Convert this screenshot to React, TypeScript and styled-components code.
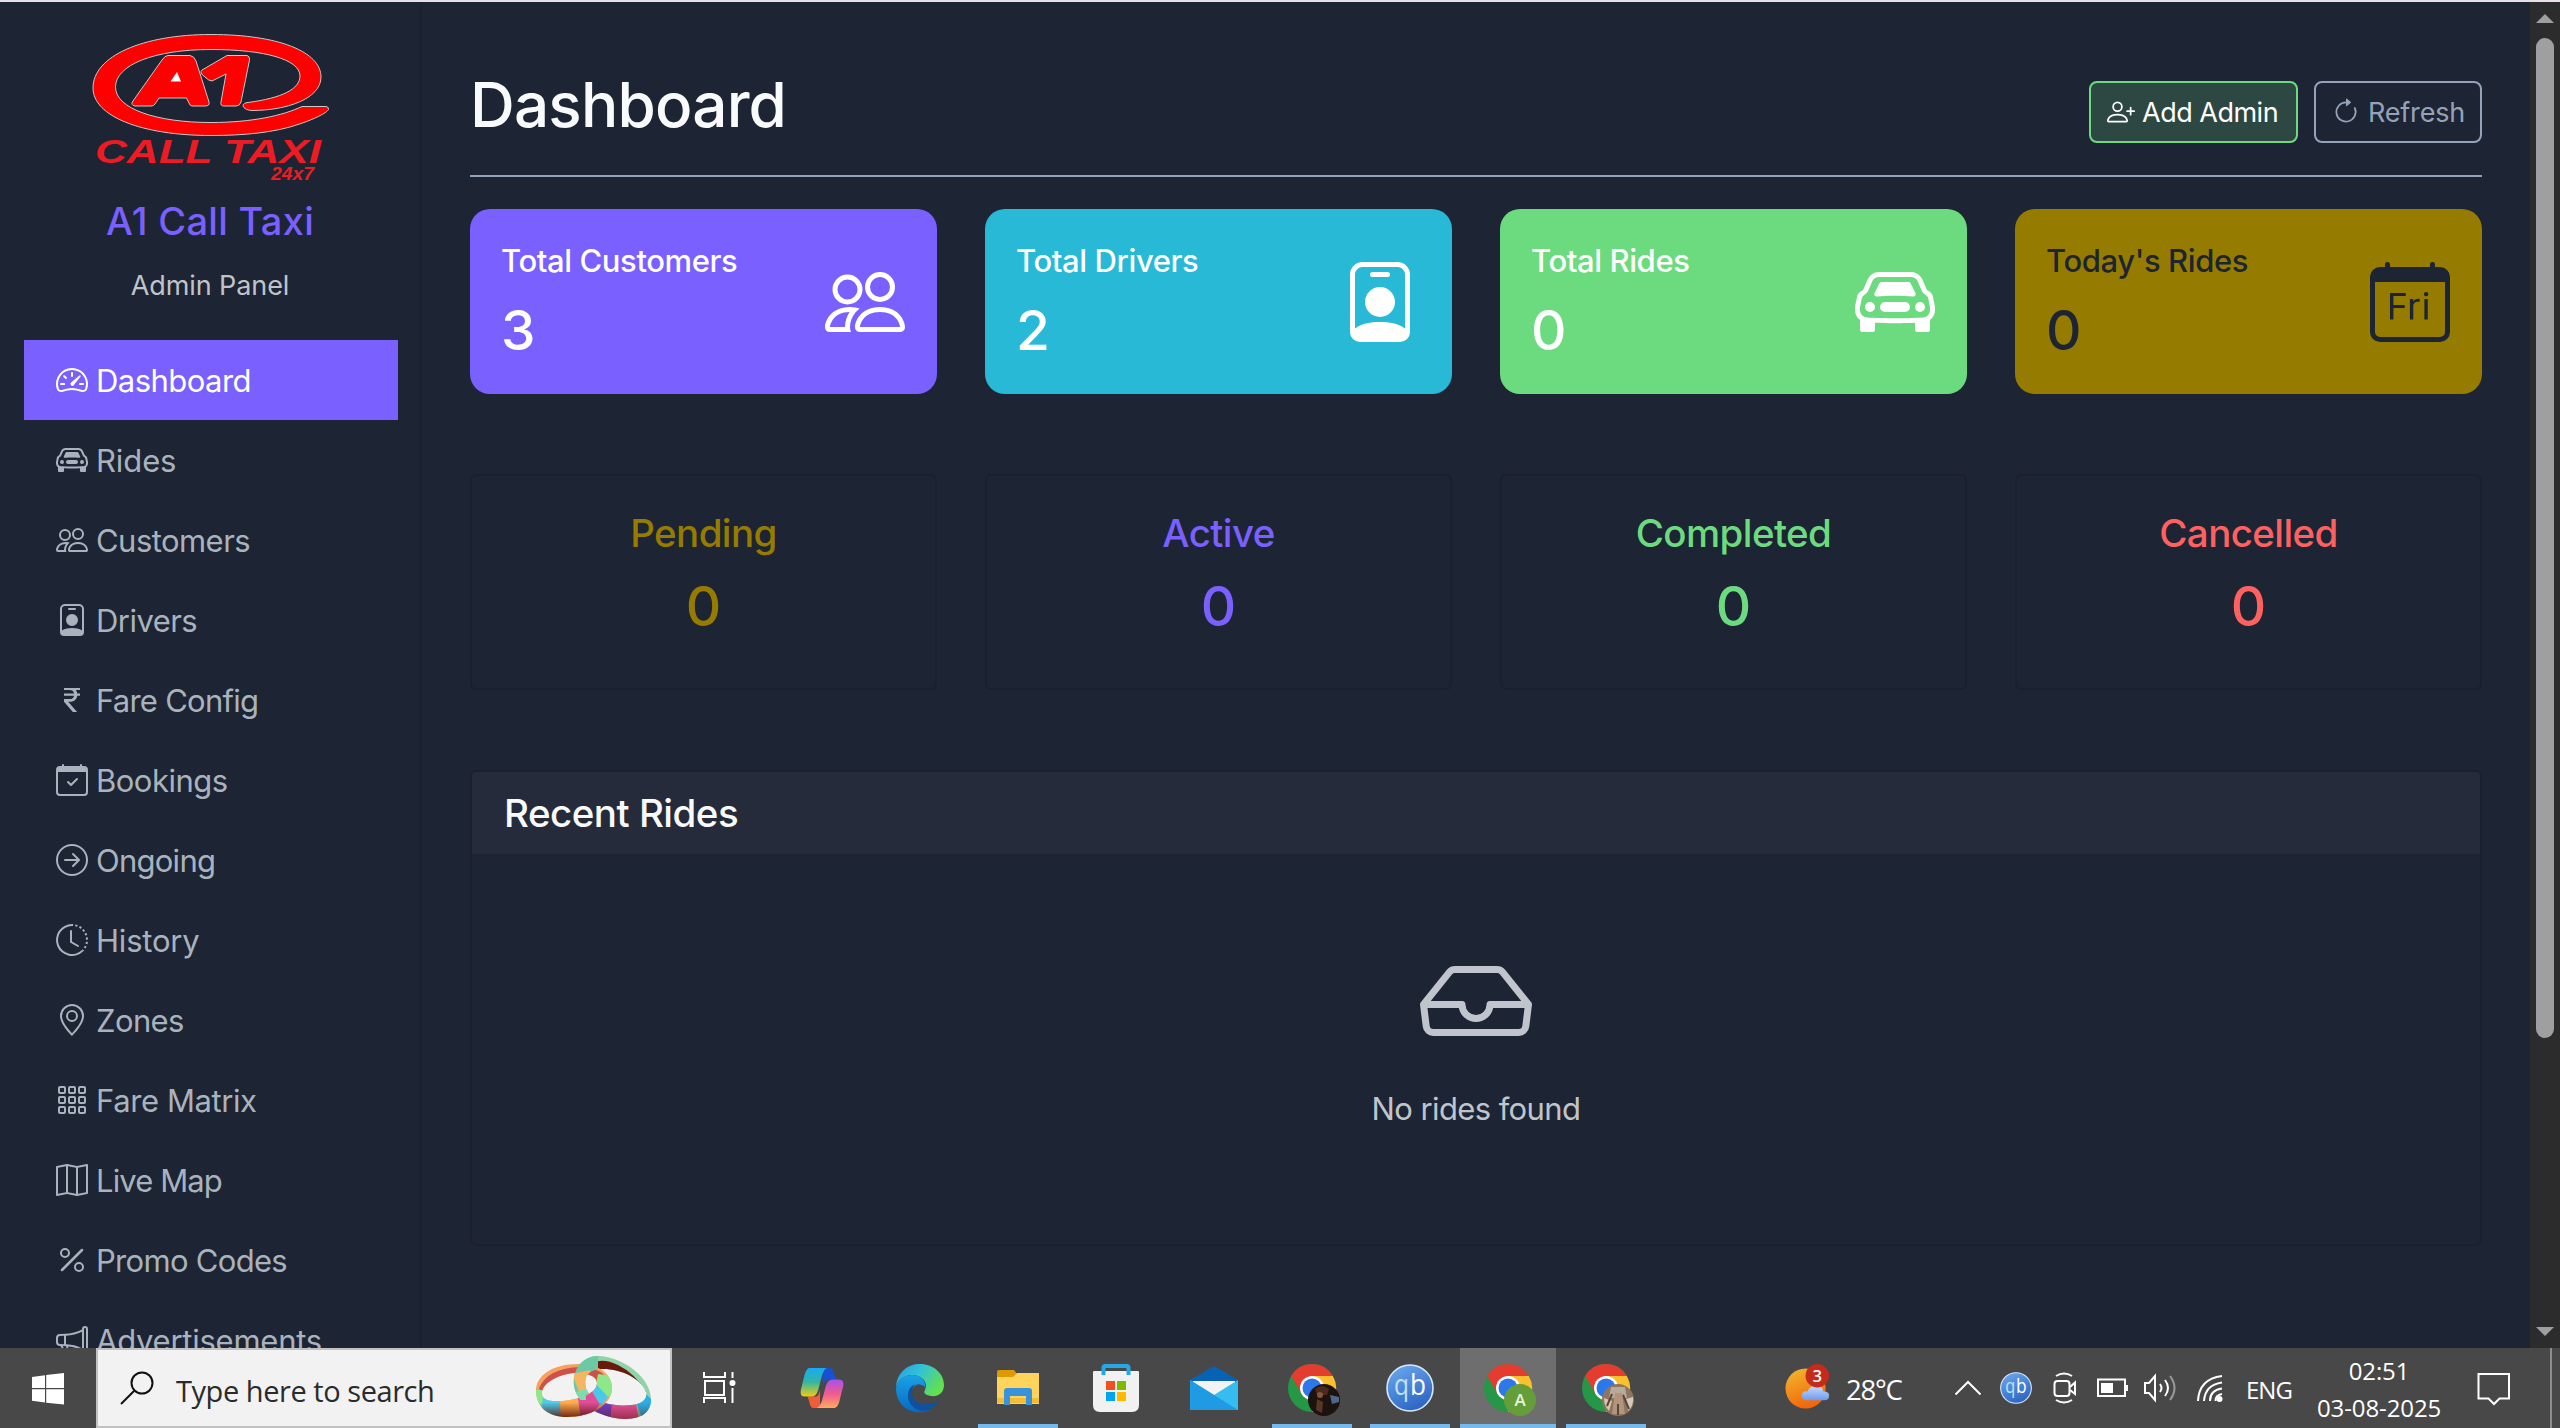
import React from "react";
import styled, { createGlobalStyle, css } from "styled-components";
import {
  BsSpeedometer2, BsCarFront, BsPeople, BsPersonBadge, BsCurrencyRupee, BsCalendarCheck,
  BsArrowRightCircle, BsClockHistory, BsGeoAlt, BsGrid3X3Gap, BsMap, BsPercent, BsMegaphone,
  BsPersonPlus, BsArrowClockwise, BsCalendarDay, BsInbox,
} from "react-icons/bs";

const c = {
  bg: "#1d2433", purple: "#7960ff", cyan: "#28b9d7", green: "#6cdb7f", olive: "#957c00",
  red: "#ff6161", muted: "#a9b3bd", line: "#94a3b8", light: "#f8fafc", edge: "#1a202f",
};

const Global = createGlobalStyle`
  * { box-sizing: border-box; }
  html, body { margin: 0; padding: 0; overflow: hidden; background: ${c.bg}; }
  h1, h2, h3, p { margin: 0; font-weight: 550; }
  svg { display: block; flex: none; overflow: visible; }
`;

const Screen = styled.div`
  width: 2560px; height: 1428px; overflow: hidden;
  display: flex; flex-direction: column;
  border-top: 2px solid #eadfe9;
  background: ${c.bg}; color: ${c.light};
  font-family: "Inter", "Noto Sans", sans-serif;
`;
const Browser = styled.div`
  height: 1346px; display: flex; overflow: hidden; flex: none;
`;

/* sidebar */
const Sidebar = styled.nav`
  width: 422px; flex: none; padding: 30px 22px 0 24px;
  border-right: 2px solid ${c.edge};
  display: flex; flex-direction: column; overflow: hidden;
`;
const Brand = styled.div`
  display: flex; flex-direction: column; align-items: center; height: 308px; flex: none; padding-right: 2px;
`;
const BrandName = styled.h2`
  color: ${c.purple}; font-size: 38px; line-height: 48px; margin-top: 13px; letter-spacing: 0.3px;
`;
const BrandSub = styled.p`
  color: #c0c4c9; font-size: 27px; line-height: 36px; margin-top: 23px; font-weight: 400; letter-spacing: -0.1px;
`;
const NavItem = styled.a<{ $active?: boolean }>`
  height: 80px; flex: none; padding: 0 32px; display: flex; align-items: center; gap: 8px;
  color: ${(p) => (p.$active ? "#fff" : c.muted)};
  background: ${(p) => (p.$active ? c.purple : "transparent")};
  svg { width: 32px; height: 32px; }
`;
const NavLabel = styled.span<{ $ls: number }>`
  font-size: 31px; line-height: 48px; padding-top: 2px; letter-spacing: ${(p) => p.$ls}px; white-space: nowrap;
`;

/* main */
const Main = styled.main`
  flex: 1; padding: 0 48px; display: flex; flex-direction: column;
`;
const Header = styled.header`
  height: 175px; flex: none; padding-top: 64px;
  border-bottom: 2px solid ${c.line};
  display: flex; justify-content: space-between; align-items: flex-start;
`;
const Title = styled.h1`
  font-size: 62px; line-height: 80px; margin-top: -1px; letter-spacing: -0.8px; font-weight: 500;
`;
const Actions = styled.div`display: flex; gap: 16px; padding-top: 15px;`;
const Button = styled.button<{ $primary?: boolean }>`
  height: 62px; width: ${(p) => (p.$primary ? 209 : 168)}px; border-radius: 8px; padding: 0 0 0 16px;
  display: flex; align-items: center; gap: ${(p) => (p.$primary ? 7 : 8)}px;
  font-family: inherit; font-size: 27px; white-space: nowrap; letter-spacing: ${(p) => (p.$primary ? -0.5 : -0.2)}px;
  border: 2px solid ${(p) => (p.$primary ? c.green : c.line)};
  background: ${(p) => (p.$primary ? "#2d4742" : "transparent")};
  color: ${(p) => (p.$primary ? "#fff" : c.line)};
  svg { width: 28px; height: 28px; }
`;
const Grid = styled.section<{ $top: number }>`
  display: grid; grid-template-columns: repeat(4, 1fr); gap: 48px; margin-top: ${(p) => p.$top}px;
`;
const StatCard = styled.article<{ $bg: string; $fg?: string }>`
  height: 185px; border-radius: 20px; padding: 32px 32px 0 31px;
  background: ${(p) => p.$bg}; color: ${(p) => p.$fg || "#fff"};
  display: flex; justify-content: space-between;
  > svg { width: 80px; height: 80px; margin-top: 21px; }
`;
const StatLabel = styled.h3`font-size: 31px; line-height: 40px; letter-spacing: -0.4px;`;
const StatValue = styled.p`font-size: 55px; line-height: 68px; margin-top: 15px;`;
const StatusCard = styled.article<{ $color: string }>`
  height: 216px; border: 2px solid ${c.edge}; border-radius: 6px; color: ${(p) => p.$color};
  text-align: center; padding-top: 33px;
`;
const StatusLabel = styled.h3`font-size: 38.5px; line-height: 48px; letter-spacing: -0.6px; font-weight: 500;`;
const StatusValue = styled.p`font-size: 55px; line-height: 68px; margin-top: 15px;`;
const Panel = styled.section`
  margin-top: 80px; height: 476px; border: 2px solid ${c.edge}; border-radius: 6px;
  display: flex; flex-direction: column; overflow: hidden;
`;
const PanelHead = styled.h2`
  height: 82px; padding: 0 32px; background: #252b3b; font-size: 38.5px; line-height: 82px; flex: none;
  letter-spacing: -0.5px;
`;
const Empty = styled.div`
  flex: 1; display: flex; flex-direction: column; align-items: center; color: #c0c4cc;
  padding-top: 91px;
  svg { width: 112px; height: 112px; }
`;
const EmptyText = styled.p`
  font-size: 31px; line-height: 48px; margin-top: 28px; font-weight: 400; letter-spacing: -0.6px;
`;

const Scrollbar = styled.div`
  width: 30px; background: #2c2c2c; flex: none;
  display: flex; flex-direction: column; align-items: center; padding: 12px 0;
`;
const Thumb = styled.div`
  width: 18px; height: 1000px; border-radius: 9px; background: #9f9f9f; margin: 15px 0 auto;
`;
const Arrow = styled.i<{ $down?: boolean }>`
  width: 0; height: 0; border: 9px solid transparent;
  ${(p) => p.$down
    ? css`border-top-color: #9f9f9f; border-bottom: 0;`
    : css`border-bottom-color: #9f9f9f; border-top: 0;`}
`;

/* taskbar */
const Taskbar = styled.footer`
  height: 80px; flex: none; background: #484848; display: flex; color: #fff;
  font-family: "Open Sans", "Noto Sans", sans-serif;
`;
const Start = styled.div`width: 96px; display: flex; align-items: center; justify-content: center; padding-top: 2px;`;
const Search = styled.div`
  width: 576px; background: #f2f2f2; border: 2px solid #c1c1c1; color: #2b2b2b;
  display: flex; align-items: center; padding: 0 18px 0 22px; font-size: 29px; letter-spacing: -0.45px; white-space: nowrap;
`;
const SearchText = styled.span`margin: 5px auto 0 22px;`;
const TaskItem = styled.div<{ $gap?: number; $open?: boolean; $active?: boolean }>`
  width: 96px; height: 80px; margin-right: ${(p) => p.$gap ?? 2}px;
  display: flex; align-items: center; justify-content: center;
  background: ${(p) => (p.$active ? "#6e6e6e" : "transparent")};
  position: relative;
  &::after {
    content: ""; position: absolute; bottom: 0; height: 4px; background: #76b9ed;
    left: ${(p) => (p.$active ? 0 : 8)}px; right: ${(p) => (p.$active ? 0 : 8)}px;
    display: ${(p) => (p.$open || p.$active ? "block" : "none")};
  }
`;
const Tray = styled.div`
  margin-left: auto; display: flex; align-items: center; height: 80px; white-space: nowrap;
`;
const Weather = styled.div`
  display: flex; align-items: center; gap: 16px; width: 170px; padding-left: 1px; font-size: 27.5px; letter-spacing: -1.2px;
  svg { margin-bottom: 4px; }
`;
const TrayText = styled.span`padding-top: 3px;`;
const TrayIcons = styled.div`display: flex; align-items: center; width: 292px;`;
const Slot = styled.span<{ $gap: number }>`margin-left: ${(p) => p.$gap}px;`;
const Lang = styled.span`width: 71px; font-size: 24px; letter-spacing: -1px; padding-top: 3px;`;
const Clock = styled.div`
  width: 124px; text-align: center; font-size: 24px; line-height: 37px; letter-spacing: -0.1px; padding-top: 2px;
`;
const Notice = styled.div`width: 109px; display: flex; justify-content: center; padding: 1px 4px 0 0;`;
const Edge = styled.div`width: 10px; height: 80px; border-left: 2px solid #8c8c8c;`;

const Logo = () => (
  <svg width="240" height="152" viewBox="91 32 240 152">
    <g fill="#f00" stroke="#c9c9c9" strokeWidth="1" strokeLinejoin="round">
      <path d="M303 106.500H327Q330 107 329.500 109.500C328 113 314 119.500 302 123.500C276 133 243 135.500 212 135.500C142 135.500 94 116 94 88C94 56 144 34.500 212 34.500C280 34.500 322 52 322 77C322 99 287 110.500 253 110.500C243 110 241 103 249 102.500C283 98 301 89 301 76C301 59 264 49.500 212 49.500C155 49.500 116.500 65 116.500 87C116.500 109 158 122.500 212 122.500C253 122.500 284 115.500 303 106.500Z" />
      <path d="M169 55.500H191Q195 56 197 61L210 102Q211 106 206 106H193Q191 106 190 103L187.500 98H160L156 104Q155 106 152 106H136Q131 105 134 101L163 60Q166 55.500 169 55.500Z" />
      <path d="M228 55.500H248Q251 56 250.500 60L242 102Q241 106 237 106H225Q221 106 222 102L227 74L213 81Q210 81 206 77Q200 73 203 70Z" />
    </g>
    <path d="M178 72L171.500 81.500H182Z" fill="#fff" />
    <g fill="#ed1c24" fontFamily="Liberation Sans, Arial, sans-serif" fontWeight="700" fontStyle="italic">
      <text x="96" y="163" fontSize="33" textLength="226" lengthAdjust="spacingAndGlyphs">CALL TAXI</text>
      <text x="272" y="180" fontSize="17.500" textLength="43" lengthAdjust="spacingAndGlyphs">24x7</text>
    </g>
  </svg>
);

const Windows = () => (
  <svg width="32" height="32" viewBox="0 0 32 32" fill="#fff">
    <path d="M0 4L13 2.200V15H0ZM14.200 2L32 0V15H14.200ZM0 16.200H13V29.500L0 27.800ZM14.200 16.200H32V31.500L14.200 29.700Z" />
  </svg>
);
const Magnifier = () => (
  <svg width="34" height="34" viewBox="0 0 34 34" fill="none" stroke="#111" strokeWidth="2">
    <circle cx="22" cy="12" r="10.500" /><path d="M14.500 19.500L1 33" />
  </svg>
);
const leftRing = "M0 36C-1 18 20 7 45 8C66 9 77 20 76 34C74 50 54 61 31 61C12 61 1 51 0 36ZM6 38C6 44 14 46 27 45C47 43 61 36 61 27C61 20 51 17 40 17C21 18 5 28 6 38Z";
const rightRing = "M38 30C36 12 48 -1 64 0C88 2 116 22 115 45C114 58 104 63 87 63C62 61 41 48 38 30ZM50 32C55 45 72 51 96 49C106 48 112 43 110 36C105 22 84 12 64 13C52 14 47 22 50 32Z";
const Rings = () => (
  <svg width="116" height="64" viewBox="0 0 116 64">
    <defs>
      <clipPath id="ringLeft"><path d={leftRing} clipRule="evenodd" /></clipPath>
      <clipPath id="ringRight"><path d={rightRing} clipRule="evenodd" /></clipPath>
      <clipPath id="ringFront"><path d="M34 0H62V15L50 20V44H34Z" /></clipPath>
      <linearGradient id="ringShade" x1="0" y1="0" x2="0" y2="1">
        <stop offset=".72" stopColor="#5a1206" stopOpacity="0" /><stop offset="1" stopColor="#5a1206" stopOpacity=".9" />
      </linearGradient>
    </defs>
    <g clipPath="url(#ringRight)">
      <path d="M30-5H120V70H30Z" fill="#8fd3a9" />
      <path d="M54 8Q66 1 82 9Q100 18 110 36L106 44Q86 10 52 18Z" fill="#6a1a0c" />
      <path d="M50 48L62 40L78 46L76 66H56Z" fill="#6f3fc6" />
      <path d="M76 46L100 46L103 66H74Z" fill="#e4529b" />
      <path d="M100 46L110 38L118 46L106 62Z" fill="#29aee6" />
      <path d="M38-2H118V66H38Z" fill="url(#ringShade)" opacity=".7" />
    </g>
    <g clipPath="url(#ringLeft)">
      <path d="M-2 0H80V64H-2Z" fill="#f5a25f" />
      <path d="M3 32Q12 12 44 11Q66 12 72 24L60 30Q54 14 32 18Q12 24 6 38Z" fill="#cf4f4a" />
      <path d="M-2 34L7 34L12 46L7 54L-2 48Z" fill="#8ee88a" />
      <path d="M7 40L24 44L25 64H4Z" fill="#4dcdee" />
      <path d="M24 44L42 42L45 64H25Z" fill="#ffae50" />
      <path d="M42 42L56 35L64 48L52 64H45Z" fill="#e04e9a" />
      <path d="M56 35L62 28L74 38L65 50Z" fill="#49c7ec" />
      <path d="M60 28L62 18L78 20V36L72 41Z" fill="#8ee88a" />
      <path d="M-2 6H80V62H-2Z" fill="url(#ringShade)" />
    </g>
    <g clipPath="url(#ringFront)">
      <g clipPath="url(#ringRight)">
        <path d="M30-5H70V60H30Z" fill="#6cc9a3" />
        <path d="M36 18L54 14L54 34L44 38Z" fill="#f5b661" />
        <path d="M40 36L54 31V46H42Z" fill="#7fdcb0" />
      </g>
    </g>
  </svg>
);
const TaskView = () => (
  <svg width="34" height="32" viewBox="0 0 34 32" fill="none" stroke="#fff" strokeWidth="2">
    <path d="M1 0V5H22V0M2 9H21V23H2ZM1 31V26H22V31M29.500 0V6M29.500 16V31" /><circle cx="29.500" cy="11" r="3" fill="#fff" stroke="none" />
  </svg>
);
const Copilot = () => (
  <svg width="44" height="40" viewBox="0 0 46 42">
    <defs>
      <linearGradient id="cpA" x1="0" y1="0" x2="0" y2="1"><stop stopColor="#18a9f5" /><stop offset=".5" stopColor="#35b6a1" /><stop offset="1" stopColor="#f3cb13" /></linearGradient>
      <linearGradient id="cpB" x1="0" y1="0" x2="0" y2="1"><stop stopColor="#a552ef" /><stop offset=".5" stopColor="#f05a8e" /><stop offset="1" stopColor="#ffab60" /></linearGradient>
    </defs>
    <path d="M23 0H31Q34 0 35 4L38 12H29Q26 12 24 19Z" fill="#1552d2" />
    <path d="M21 42H14Q11 42 10 37L8 30H16Q20 30 21 22Z" fill="#f25b38" />
    <path d="M10 0H28Q25 1 23 8L19 23Q17 30 12 30H5Q-1 30 1 22L5 6Q7 0 10 0Z" fill="url(#cpA)" />
    <path d="M36 42H17Q21 41 23 34L27 19Q29 12 34 12H41Q47 12 45 20L41 36Q39 42 36 42Z" fill="url(#cpB)" />
  </svg>
);
const EdgeBrowser = () => (
  <svg width="48" height="48" viewBox="0 0 48 48">
    <defs>
      <linearGradient id="edA" x1="0" y1="0" x2="1" y2=".5"><stop stopColor="#239de6" /><stop offset=".5" stopColor="#33c3d5" /><stop offset="1" stopColor="#61e052" /></linearGradient>
      <linearGradient id="edB" x1="0" y1="0" x2="0" y2="1"><stop stopColor="#1aa2e5" /><stop offset="1" stopColor="#0869c3" /></linearGradient>
    </defs>
    <path d="M0 23C1 8 12 0 24 0C38 0 48 10 48 21C48 29 42 33 35 32C29 31 27 29 29 26C33 18 25 11 16 11C8 11 2 16 0 23Z" fill="url(#edA)" />
    <path d="M0 24C2 15 9 11 16 11C25 11 30 17 29 23Q22 17 17 24C11 34 19 43 34 46C17 53 0 43 0 24Z" fill="url(#edB)" />
    <path d="M19 20C12 30 18 40 30 40Q38 40 44 36Q36 48 26 47C11 45 7 26 19 20Z" fill="#11509d" />
  </svg>
);
const Folder = () => (
  <svg width="42" height="36" viewBox="0 0 42 36">
    <path d="M0 2Q0 0 2 0H17L20 4V10H0Z" fill="#dd9b00" />
    <path d="M0 7H16L20 3H42V34H0Z" fill="#ffd35c" /><path d="M0 28H42V33H0Z" fill="#f5bd36" />
    <path d="M7 35V21Q7 18 10 18H32Q35 18 35 21V35H29V26H13V35Z" fill="#3993db" />
  </svg>
);
const Store = () => (
  <svg width="46" height="48" viewBox="0 0 46 48">
    <path d="M0 8Q0 7 1 7H45Q46 7 46 8V41Q46 48 39 48H7Q0 48 0 41Z" fill="#f1f1f1" />
    <path d="M10.500 11V4Q10.500 2 12.500 2H33.500Q35.500 2 35.500 4V11" fill="none" stroke="#24a9e8" strokeWidth="4" />
    <path d="M13 17H22V26H13Z" fill="#f25022" /><path d="M24 17H33V26H24Z" fill="#7fba00" />
    <path d="M13 28H22V37H13Z" fill="#00a4ef" /><path d="M24 28H33V37H24Z" fill="#ffb900" />
  </svg>
);
const Mail = () => (
  <svg width="48" height="44" viewBox="0 0 48 44">
    <path d="M0 14L22 1Q24 0 26 1L48 14V20H0Z" fill="#0862b3" /><path d="M3 15H45V31H3Z" fill="#f3f3f3" />
    <path d="M0 14L24 29L48 14V44H0Z" fill="#35bdf1" /><path d="M0 14L48 44H0Z" fill="#1e9be2" />
  </svg>
);
const Chrome = ({ badge }: { badge: "photo" | "letter" | "group" }) => (
  <svg width="48" height="48" viewBox="0 0 48 48">
    <circle cx="24" cy="24" r="24" fill="#249846" />
    <path d="M3.200 12A24 24 0 0 1 44.800 12H24L13.600 30Z" fill="#e43d30" />
    <path d="M24 12H44.800A24 24 0 0 1 24 48L34.400 30Z" fill="#fbc02d" />
    <circle cx="24" cy="24" r="12" fill="#fff" /><circle cx="24" cy="24" r="9.500" fill="#2c78ea" />
    {badge === "letter" && (<><circle cx="36" cy="36" r="16" fill="#659e38" /><text x="36" y="42" fontSize="17" fontWeight="600" fill="#e7f2dc" textAnchor="middle">A</text></>)}
    {badge === "photo" && (<><circle cx="36" cy="36" r="16" fill="#1c1310" /><path d="M27 25Q34 19 41 25L39 31H29Z" fill="#4b2a1b" /><path d="M42 31L51 33V38L44 40Z" fill="#4f6688" /><path d="M29 35L35 38L34 49L28 46Z" fill="#5a3523" /><circle cx="32" cy="31" r="3" fill="#83573e" /></>)}
    {badge === "group" && (<><circle cx="36" cy="36" r="16" fill="#8d755f" /><path d="M29 23H43L45 34H27Z" fill="#b8aa98" /><path d="M22 34L30 37L27 47Q22 42 22 34Z" fill="#d8c7ad" /><path d="M33 29H40L43 50H30Z" fill="#b5947d" /><path d="M44 35L51 33Q52 42 46 47Z" fill="#d5c9b8" /><path d="M30 30L25 42M41 31L47 45M36 40V51" stroke="#54473b" strokeWidth="2" /></>)}
  </svg>
);
const Qb = ({ size }: { size: number }) => (
  <svg width={size} height={size} viewBox="0 0 48 48">
    <defs><linearGradient id="qbG" x1="0" y1="0" x2=".5" y2="1"><stop stopColor="#6fabf0" /><stop offset="1" stopColor="#2f68c4" /></linearGradient></defs>
    <circle cx="24" cy="24" r="23" fill="url(#qbG)" stroke="#d6e9ff" strokeWidth="1.600" />
    <text x="8" y="31" fontSize="29" fill="#bfe3fb" textLength="15" lengthAdjust="spacingAndGlyphs">q</text>
    <text x="24" y="31" fontSize="29" fill="#fff" textLength="16" lengthAdjust="spacingAndGlyphs">b</text>
  </svg>
);
const Sun = () => (
  <svg width="45" height="45" viewBox="0 0 46 46">
    <defs><linearGradient id="sunG" x1="0" y1="0" x2=".4" y2="1"><stop stopColor="#f0bc30" /><stop offset="1" stopColor="#f2670a" /></linearGradient>
      <linearGradient id="cloudG" x1="0" y1="0" x2="0" y2="1"><stop stopColor="#c8dcff" /><stop offset="1" stopColor="#6e9bee" /></linearGradient></defs>
    <circle cx="21" cy="25" r="20.500" fill="url(#sunG)" />
    <path d="M22 37Q17 37 17 32Q18 27 23 28Q26 21 33 22Q39 23 39 28Q46 28 45 33Q45 37 40 37Z" fill="url(#cloudG)" />
    <circle cx="33" cy="12" r="12" fill="#c42b1c" />
    <text x="32.500" y="18" fontSize="17" fontWeight="600" fill="#fff" textAnchor="middle">3</text>
  </svg>
);
const trayStroke = { fill: "none", stroke: "#fff", strokeWidth: 2 };
const Chevron = () => (<svg width="28" height="16" viewBox="0 0 28 16" {...trayStroke}><path d="M1.500 14.500L14 2L26.500 14.500" /></svg>);
const Camera = () => (<svg width="24" height="32" viewBox="0 0 24 32" {...trayStroke}><rect x="1.500" y="9" width="15" height="15" rx="3" /><path d="M17 15L22 10.500V22L17 18M3 4Q11-1 19 4M3 28Q11 33 19 28" /></svg>);
const Battery = () => (<svg width="32" height="20" viewBox="0 0 32 20" {...trayStroke}><path d="M1 1.500H28V18H1ZM30 7V13" /><path d="M4 5H16V15H4Z" fill="#fff" stroke="none" /></svg>);
const Volume = () => (<svg width="34" height="28" viewBox="0 0 34 28" {...trayStroke}><path d="M1 9H5L11 2V26L5 19H1ZM16 10Q19 14 16 18M21 6Q27 14 21 22" /><path d="M26 2Q35 14 26 26" stroke="#999" /></svg>);
const Wifi = () => (<svg width="28" height="28" viewBox="0 0 28 28" {...trayStroke}><path d="M2 27Q3 5 26 2M8 27Q9 11 26 8.500M14 27Q14 16 26 14.500" /><path d="M19.500 27Q19.500 21 26 20" /><circle cx="23.500" cy="25" r="3" fill="#fff" stroke="none" /></svg>);
const Bubble = () => (<svg width="34" height="34" viewBox="0 0 34 34" {...trayStroke}><path d="M1.500 2H32V26.500H22.500L17 32L11.500 26.500H1.500Z" /></svg>);

const nav = [
  { label: "Dashboard", Icon: BsSpeedometer2, ls: -0.55 },
  { label: "Rides", Icon: BsCarFront, ls: -0.1 },
  { label: "Customers", Icon: BsPeople, ls: -0.55 },
  { label: "Drivers", Icon: BsPersonBadge, ls: -0.55 },
  { label: "Fare Config", Icon: BsCurrencyRupee, ls: -0.75 },
  { label: "Bookings", Icon: BsCalendarCheck, ls: -0.5 },
  { label: "Ongoing", Icon: BsArrowRightCircle, ls: -0.75 },
  { label: "History", Icon: BsClockHistory, ls: -0.2 },
  { label: "Zones", Icon: BsGeoAlt, ls: -0.6 },
  { label: "Fare Matrix", Icon: BsGrid3X3Gap, ls: -0.4 },
  { label: "Live Map", Icon: BsMap, ls: -0.9 },
  { label: "Promo Codes", Icon: BsPercent, ls: -0.7 },
  { label: "Advertisements", Icon: BsMegaphone, ls: -0.25 },
];
const stats = [
  { label: "Total Customers", value: 3, bg: c.purple, Icon: BsPeople },
  { label: "Total Drivers", value: 2, bg: c.cyan, Icon: BsPersonBadge },
  { label: "Total Rides", value: 0, bg: c.green, Icon: BsCarFront },
  { label: "Today's Rides", value: 0, bg: c.olive, fg: c.bg, Icon: BsCalendarDay },
];
const statuses = [
  { label: "Pending", color: c.olive }, { label: "Active", color: c.purple },
  { label: "Completed", color: c.green }, { label: "Cancelled", color: c.red },
];

export default function App() {
  return (
    <Screen>
      <Global />
      <Browser>
        <Sidebar>
          <Brand><Logo /><BrandName>A1 Call Taxi</BrandName><BrandSub>Admin Panel</BrandSub></Brand>
          {nav.map(({ label, Icon, ls }, i) => (
            <NavItem key={label} $active={i === 0}><Icon /><NavLabel $ls={ls}>{label}</NavLabel></NavItem>
          ))}
        </Sidebar>
        <Main>
          <Header>
            <Title>Dashboard</Title>
            <Actions>
              <Button $primary><BsPersonPlus />Add Admin</Button>
              <Button><BsArrowClockwise />Refresh</Button>
            </Actions>
          </Header>
          <Grid $top={32}>
            {stats.map(({ label, value, bg, fg, Icon }) => (
              <StatCard key={label} $bg={bg} $fg={fg}>
                <div><StatLabel>{label}</StatLabel><StatValue>{value}</StatValue></div>
                <Icon />
              </StatCard>
            ))}
          </Grid>
          <Grid $top={80}>
            {statuses.map((s) => (
              <StatusCard key={s.label} $color={s.color}>
                <StatusLabel>{s.label}</StatusLabel><StatusValue>0</StatusValue>
              </StatusCard>
            ))}
          </Grid>
          <Panel>
            <PanelHead>Recent Rides</PanelHead>
            <Empty><BsInbox /><EmptyText>No rides found</EmptyText></Empty>
          </Panel>
        </Main>
        <Scrollbar><Arrow /><Thumb /><Arrow $down /></Scrollbar>
      </Browser>
      <Taskbar>
        <Start><Windows /></Start>
        <Search><Magnifier /><SearchText>Type here to search</SearchText><Rings /></Search>
        <TaskItem $gap={6}><TaskView /></TaskItem>
        <TaskItem><Copilot /></TaskItem>
        <TaskItem><EdgeBrowser /></TaskItem>
        <TaskItem $open><Folder /></TaskItem>
        <TaskItem><Store /></TaskItem>
        <TaskItem><Mail /></TaskItem>
        <TaskItem $open><Chrome badge="photo" /></TaskItem>
        <TaskItem $open><Qb size={48} /></TaskItem>
        <TaskItem $active><Chrome badge="letter" /></TaskItem>
        <TaskItem $open><Chrome badge="group" /></TaskItem>
        <Tray>
          <Weather><Sun /><TrayText>28°C</TrayText></Weather>
          <TrayIcons>
            <Slot $gap={0}><Chevron /></Slot>
            <Slot $gap={18}><Qb size={32} /></Slot>
            <Slot $gap={21}><Camera /></Slot>
            <Slot $gap={20}><Battery /></Slot>
            <Slot $gap={15}><Volume /></Slot>
            <Slot $gap={18}><Wifi /></Slot>
          </TrayIcons>
          <Lang>ENG</Lang>
          <Clock>02:51<br />03-08-2025</Clock>
          <Notice><Bubble /></Notice>
          <Edge />
        </Tray>
      </Taskbar>
    </Screen>
  );
}
